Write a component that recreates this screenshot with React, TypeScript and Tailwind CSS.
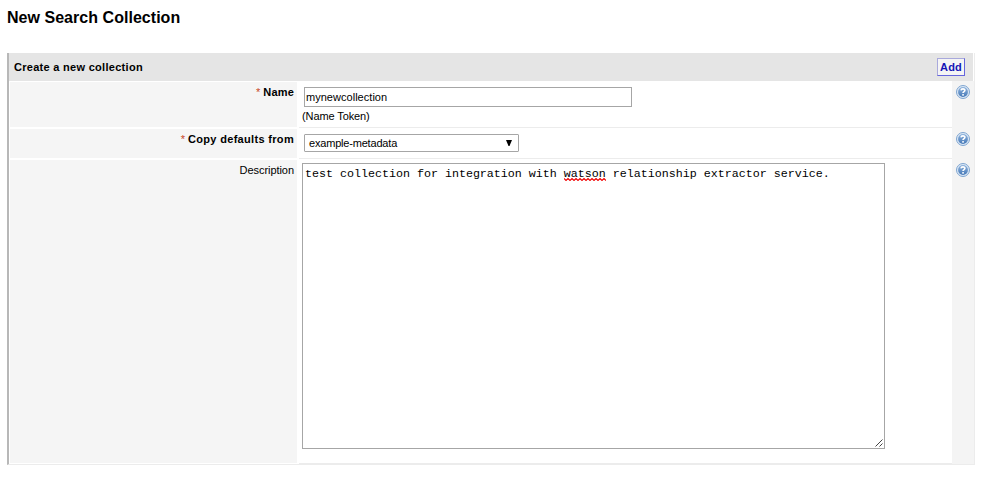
import React from "react";

function HelpIcon() {
  return (
    <svg width="14" height="14" viewBox="0 0 14 14" className="block" role="img" aria-label="Help">
      <defs>
        <linearGradient id="help" x1="0" y1="0" x2="0" y2="1">
          <stop offset="0" stopColor="#8fb3dc" />
          <stop offset="1" stopColor="#4679b8" />
        </linearGradient>
      </defs>
      <circle cx="7" cy="7" r="6.5" fill="#dce8f5" stroke="#7fa5d0" strokeWidth="1" />
      <circle cx="7" cy="7" r="4.9" fill="url(#help)" />
      <path d="M5 5.4C5.1 3.4 8.9 3.4 8.9 5.3C8.9 6.6 7 6.5 7 8.1" fill="none" stroke="#fff" strokeWidth="1.6" />
      <rect x="6.2" y="9.1" width="1.7" height="1.5" fill="#fff" />
    </svg>
  );
}

type RowProps = {
  label: string;
  required?: boolean;
  height: string;
  labelClass: string;
  children: React.ReactNode;
};

function Row({ label, required, height, labelClass, children }: RowProps) {
  return (
    <div className={`flex ${height}`}>
      <div className="flex w-[290px] shrink-0 pt-px pr-[2px] pb-px pl-px">
        <div className="flex h-full w-[287px] justify-end bg-[#f5f5f5] pt-[4px] pr-[3px] leading-[13px]">
          {required && <span className="mr-[3px] text-[11px] text-[#c8461e]">*</span>}
          <span className={labelClass}>{label}</span>
        </div>
      </div>
      <div className="flex-1 border-b border-[#ececec]">{children}</div>
      <div className="w-[22px] shrink-0 bg-[#f4f4f4] pt-[4px] pl-[4px]">
        <HelpIcon />
      </div>
    </div>
  );
}

export default function App() {
  return (
    <main className="h-[477px] w-[983px] bg-white pl-[7px] font-['Liberation_Sans',Arial,sans-serif] text-[11px] text-black">
      <h1 className="h-[53px] pt-[8px] text-[16px] leading-[19px] font-bold whitespace-nowrap">
        <span className="tracking-[0.035px]">New Search Collection</span>
      </h1>
      <section className="h-[412px] w-[968px] border-r border-b border-l-2 border-r-[#ececec] border-b-[#ececec] border-l-[#b8b8b8]">
        <header className="mr-px flex h-[28px] items-center justify-between bg-[#e5e5e5] pr-[8px] pl-[5px]">
          <h2 className="text-[11px] font-bold tracking-[0.29px]">Create a new collection</h2>
          <button className="h-[18px] w-[28px] border border-t-[#a9a9dc] border-r-[#6666dd] border-b-[#6666dd] border-l-[#a9a9dc] bg-[#f5f5f5] text-[11px] leading-[16px] font-bold tracking-[0.2px] text-[#1515b5]">
            Add
          </button>
        </header>
        <Row label="Name" required height="h-[47px]" labelClass="font-bold tracking-[0.2px]">
          <div className="pt-[6px] pl-[5px]">
            <input
              readOnly
              defaultValue="mynewcollection"
              className="block h-[20px] w-[328px] border border-[#a6a6a6] bg-white px-px text-[11px] tracking-[0.03px] outline-none"
            />
            <div className="-ml-[2px] pt-[3px] leading-[13px] tracking-[-0.1px]">(Name Token)</div>
          </div>
        </Row>
        <Row label="Copy defaults from" required height="h-[31px]" labelClass="font-bold tracking-[0.32px]">
          <div className="pt-[6px] pl-[5px]">
            <div className="flex h-[18px] w-[215px] items-center justify-between rounded-[1px] border border-[#a6a6a6] pr-[6px] pl-[4px]">
              <span className="tracking-[-0.19px]">example-metadata</span>
              <svg width="6" height="6" viewBox="0 0 6 6">
                <path d="M0 0H6L3.5 6H2.5Z" fill="#000" />
              </svg>
            </div>
          </div>
        </Row>
        <Row label="Description" height="h-[305px]" labelClass="tracking-[-0.05px]">
          <div className="pt-[4px] pl-[3px]">
            <div className="relative h-[286px] w-[583px] border border-[#a6a6a6] bg-white pt-[3px] pl-[2px] font-['Liberation_Mono',monospace] text-[11.67px] leading-[14px] whitespace-nowrap">
              test collection for integration with{" "}
              <span className="relative inline-block">
                watson
                <svg className="absolute top-[11px] left-0" width="42" height="3" viewBox="0 0 42 3">
                  <path
                    d="M0 .5L2 2.5L4 .5L6 2.5L8 .5L10 2.5L12 .5L14 2.5L16 .5L18 2.5L20 .5L22 2.5L24 .5L26 2.5L28 .5L30 2.5L32 .5L34 2.5L36 .5L38 2.5L40 .5L42 2.5"
                    fill="none"
                    stroke="#f00000"
                    strokeWidth="1.1"
                  />
                </svg>
              </span>{" "}
              relationship extractor service.
              <svg className="absolute right-px bottom-px" width="8" height="8" viewBox="0 0 8 8">
                <path d="M.5 7.5L7.5 .5M4.5 7.5L7.5 4.5" stroke="#444" strokeWidth="1" />
              </svg>
            </div>
          </div>
        </Row>
      </section>
    </main>
  );
}
